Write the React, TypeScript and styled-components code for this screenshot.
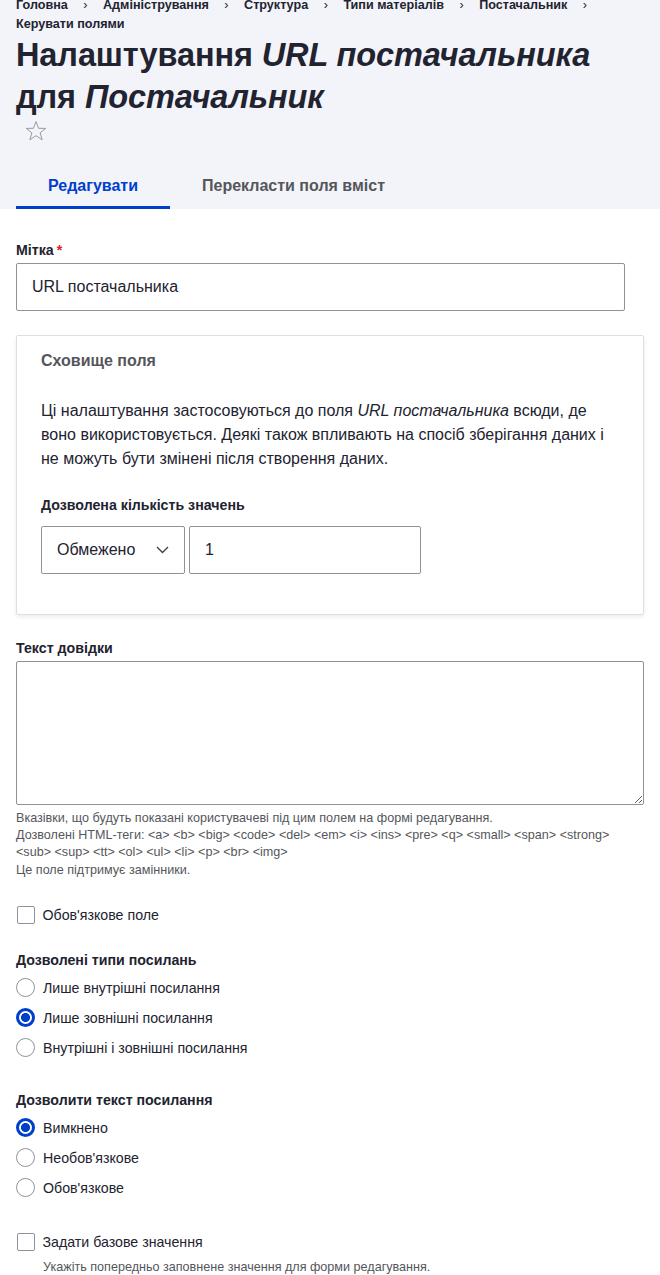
import React from "react";
import styled, { createGlobalStyle } from "styled-components";

const Global = createGlobalStyle`
  html, body { margin: 0; padding: 0; background: #fff; }
  body {
    font-family: "Liberation Sans", Arial, sans-serif;
    color: #222330;
    overflow: hidden;
  }
  * { box-sizing: border-box; }
`;

const Header = styled.header`
  background: #f3f4f9;
  padding: 0 16px;
`;

const Breadcrumb = styled.nav`
  display: flex;
  flex-wrap: wrap;
  margin-top: -4px;
  font-size: 12.6px;
  font-weight: 700;
  line-height: 19px;
`;

const Crumb = styled.span`
  display: inline-flex;
  color: #222330;
  white-space: nowrap;
`;

const Sep = styled.span`
  padding: 0 15.5px;
  color: #222330;
  font-weight: 400;
`;

const Title = styled.h1`
  margin: 0;
  font-size: 32.5px;
  line-height: 42px;
  font-weight: 700;
  letter-spacing: -0.1px;
  em { font-style: italic; }
`;

const Star = styled.svg`
  display: block;
  margin: 2px 0 0 9px;
`;

const Tabs = styled.div`
  display: flex;
  margin-top: 19px;
`;

const Tab = styled.div<{ $active?: boolean }>`
  height: 48px;
  padding: 4px 32px 0;
  display: flex;
  align-items: center;
  font-size: 16px;
  font-weight: 700;
  color: ${(p) => (p.$active ? "#003ecc" : "#55565b")};
  border-bottom: 3px solid ${(p) => (p.$active ? "#003ecc" : "transparent")};
`;

const Main = styled.main`
  padding: 32px 16px 0;
`;

const Label = styled.div<{ $mb?: number }>`
  font-size: 14.2px;
  font-weight: 700;
  line-height: 18px;
  margin-bottom: ${(p) => p.$mb ?? 4}px;
`;

const Req = styled.span`
  color: #dc2323;
  margin-left: 3px;
`;

const TextInput = styled.div<{ $w: number }>`
  width: ${(p) => p.$w}px;
  height: 48px;
  border: 1px solid #919297;
  border-radius: 2px;
  padding: 0 15px;
  display: flex;
  align-items: center;
  font-size: 16px;
  background: #fff;
`;

const Card = styled.section`
  margin-top: 24px;
  border: 1px solid #dedfe4;
  border-radius: 2px;
  box-shadow: 0 2px 4px rgba(0, 0, 0, 0.08);
  padding: 14px 24px 40px;
`;

const Legend = styled.div`
  font-size: 16px;
  font-weight: 700;
  line-height: 22px;
  color: #55565b;
`;

const Para = styled.p`
  margin: 27px 0 25px;
  font-size: 16px;
  line-height: 24px;
  padding-right: 10px;
`;

const Row = styled.div`
  display: flex;
  gap: 4px;
  margin-top: 12px;
`;

const Select = styled.div`
  width: 144px;
  height: 48px;
  border: 1px solid #919297;
  border-radius: 2px;
  padding: 0 15px;
  display: flex;
  align-items: center;
  justify-content: space-between;
  font-size: 16px;
`;

const Block = styled.div<{ $mt: number }>`
  margin-top: ${(p) => p.$mt}px;
`;

const TextArea = styled.textarea`
  display: block;
  width: 100%;
  height: 144px;
  border: 1px solid #919297;
  border-radius: 2px;
  margin: 0;
  resize: vertical;
  font-family: inherit;
`;

const Desc = styled.div<{ $indent?: number; $mt?: number }>`
  font-size: 12.6px;
  line-height: 17.2px;
  color: #55565b;
  margin-top: ${(p) => p.$mt ?? 5}px;
  padding-left: ${(p) => p.$indent ?? 0}px;
`;

const Option = styled.div`
  display: flex;
  align-items: center;
  gap: 8px;
  height: 22px;
  font-size: 14.2px;
  & + & { margin-top: 8px; }
`;

const Box = styled.span`
  width: 18px;
  height: 18px;
  border: 1px solid #8e929c;
  border-radius: 2px;
  flex: none;
  margin-left: 0.5px;
`;

const Radio = styled.span<{ $checked?: boolean }>`
  width: 19px;
  height: 19px;
  border-radius: 50%;
  flex: none;
  border: ${(p) => (p.$checked ? "3px solid #003ecc" : "1px solid #8e929c")};
  background: ${(p) =>
    p.$checked ? "radial-gradient(circle, #003ecc 0 4.2px, #fff 4.8px)" : "#fff"};
`;

const OptText = styled.span``;

const Options = styled.div`
  margin-top: 8px;
`;

function Chevron() {
  return (
    <svg width="13" height="8" viewBox="0 0 13 8">
      <path d="M1 1l5.5 5.5L12 1" fill="none" stroke="#3b3c45" strokeWidth="1.3" />
    </svg>
  );
}

export default function App() {
  const crumbs = ["Головна", "Адміністрування", "Структура", "Типи матеріалів", "Постачальник"];
  return (
    <>
      <Global />
      <Header>
        <Breadcrumb>
          {crumbs.map((c) => (
            <Crumb key={c}>
              {c}
              <Sep>›</Sep>
            </Crumb>
          ))}
          <Crumb>Керувати полями</Crumb>
        </Breadcrumb>
        <Title>
          Налаштування <em>URL постачальника</em> для <em>Постачальник</em>
        </Title>
        <Star width="22" height="22" viewBox="0 0 22 22">
          <polygon
            points="11,1.5 13.6,8.3 20.8,8.4 15.1,12.8 17.2,19.8 11,15.7 4.8,19.8 6.9,12.8 1.2,8.4 8.4,8.3"
            fill="none"
            stroke="#9a9ba3"
            strokeWidth="1"
          />
        </Star>
        <Tabs>
          <Tab $active>Редагувати</Tab>
          <Tab>Перекласти поля вміст</Tab>
        </Tabs>
      </Header>
      <Main>
        <Label>
          Мітка<Req>*</Req>
        </Label>
        <TextInput $w={609}>URL постачальника</TextInput>

        <Card>
          <Legend>Сховище поля</Legend>
          <Para>
            Ці налаштування застосовуються до поля <em>URL постачальника</em> всюди, де воно
            використовується. Деякі також впливають на спосіб зберігання даних і не можуть бути
            змінені після створення даних.
          </Para>
          <Label $mb={0}>Дозволена кількість значень</Label>
          <Row>
            <Select>
              <span>Обмежено</span>
              <Chevron />
            </Select>
            <TextInput $w={232}>1</TextInput>
          </Row>
        </Card>

        <Block $mt={24}>
          <Label>Текст довідки</Label>
          <TextArea />
          <Desc>
            Вказівки, що будуть показані користувачеві під цим полем на формі редагування.
            <br />
            Дозволені HTML-теги: &lt;a&gt; &lt;b&gt; &lt;big&gt; &lt;code&gt; &lt;del&gt; &lt;em&gt;
            &lt;i&gt; &lt;ins&gt; &lt;pre&gt; &lt;q&gt; &lt;small&gt; &lt;span&gt; &lt;strong&gt;
            &lt;sub&gt; &lt;sup&gt; &lt;tt&gt; &lt;ol&gt; &lt;ul&gt; &lt;li&gt; &lt;p&gt; &lt;br&gt;
            &lt;img&gt;
            <br />
            Це поле підтримує замінники.
          </Desc>
        </Block>

        <Block $mt={25}>
          <Option>
            <Box />
            <OptText>Обов'язкове поле</OptText>
          </Option>
        </Block>

        <Block $mt={25}>
          <Label $mb={0}>Дозволені типи посилань</Label>
          <Options>
            <Option>
              <Radio />
              <OptText>Лише внутрішні посилання</OptText>
            </Option>
            <Option>
              <Radio $checked />
              <OptText>Лише зовнішні посилання</OptText>
            </Option>
            <Option>
              <Radio />
              <OptText>Внутрішні і зовнішні посилання</OptText>
            </Option>
          </Options>
        </Block>

        <Block $mt={32}>
          <Label $mb={0}>Дозволити текст посилання</Label>
          <Options>
            <Option>
              <Radio $checked />
              <OptText>Вимкнено</OptText>
            </Option>
            <Option>
              <Radio />
              <OptText>Необов'язкове</OptText>
            </Option>
            <Option>
              <Radio />
              <OptText>Обов'язкове</OptText>
            </Option>
          </Options>
        </Block>

        <Block $mt={32}>
          <Option>
            <Box />
            <OptText>Задати базове значення</OptText>
          </Option>
          <Desc $indent={27} $mt={6}>
            Укажіть попередньо заповнене значення для форми редагування.
          </Desc>
        </Block>
      </Main>
    </>
  );
}
